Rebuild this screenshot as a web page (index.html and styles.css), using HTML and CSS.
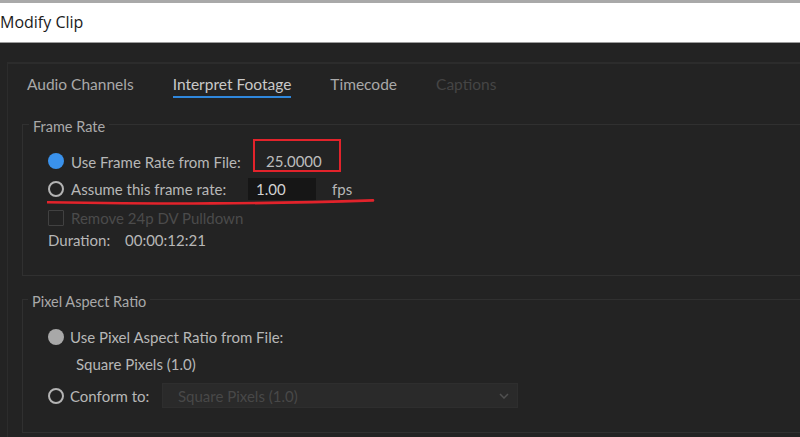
FILE: index.html
```html
<!DOCTYPE html>
<html>
<head>
<meta charset="utf-8">
<link rel="stylesheet" href="styles.css">
</head>
<body>
<div class="titlebar"><span class="title">Modify Clip</span></div>
<div class="dialog">
  <div class="panel">
    <div class="tabs">
      <div class="tab">Audio Channels</div>
      <div class="tab active">Interpret Footage</div>
      <div class="tab">Timecode</div>
      <div class="tab disabled">Captions</div>
    </div>

    <div class="group frame">
      <span class="legend">Frame Rate</span>
      <div class="row r1">
        <span class="radio on"></span>
        <span class="lbl wide">Use Frame Rate from File:</span>
        <span class="value-box">25.0000</span>
      </div>
      <div class="row r2">
        <span class="radio"></span>
        <span class="lbl wide">Assume this frame rate:</span>
        <span class="input">1.00</span>
        <span class="fps">fps</span>
        <svg class="redline" width="330" height="7" viewBox="0 0 330 7"><path d="M0 3.2 Q 90 4.6 165 4.4 T 326 1.4" fill="none" stroke="#e2232b" stroke-width="2.6" stroke-linecap="round"/></svg>
      </div>
      <div class="row r3">
        <span class="checkbox"></span>
        <span class="lbl disabled-text">Remove 24p DV Pulldown</span>
      </div>
      <div class="row r4">
        <span class="dur-label">Duration:</span>
        <span class="dur">00:00:12:21</span>
      </div>
    </div>

    <div class="group par">
      <span class="legend">Pixel Aspect Ratio</span>
      <div class="row p1">
        <span class="radio gray"></span>
        <span class="lbl tight">Use Pixel Aspect Ratio from File:</span>
      </div>
      <div class="row p2">
        <span class="sub">Square Pixels (1.0)</span>
      </div>
      <div class="row p3">
        <span class="radio"></span>
        <span class="lbl tight conform">Conform to:</span>
        <div class="select">
          <span class="select-text">Square Pixels (1.0)</span>
          <svg class="chev" width="10" height="6" viewBox="0 0 10 6"><path d="M1 1 L5 5 L9 1" fill="none" stroke="#505050" stroke-width="1.5"/></svg>
        </div>
      </div>
    </div>
  </div>
</div>
</body>
</html>
```

FILE: styles.css
```css
* { box-sizing: border-box; }
html, body {
  margin: 0;
  padding: 0;
}
body {
  width: 800px;
  height: 437px;
  overflow: hidden;
  background: #232323;
  font-family: "Lato", "Open Sans", sans-serif;
  font-size: 15px;
  color: #b7b7b7;
}
.titlebar {
  height: 43px;
  background: #ffffff;
  border-top: 3px solid #a9a9a9;
  border-bottom: 1px solid #9c9c9c;
  display: flex;
  align-items: center;
  overflow: hidden;
}
.title {
  font-family: "Open Sans", "Noto Sans", sans-serif;
  font-size: 16px;
  color: #1b1b1b;
  margin-left: 0;
  margin-top: -2px;
}
.dialog {
  padding-top: 19px;
  padding-left: 7px;
}
.panel {
  border-top: 2px solid #2c2c2c;
  border-left: 1px solid #2c2c2c;
  height: 380px;
}
.tabs {
  display: flex;
  gap: 39px;
  padding-left: 19px;
  padding-top: 10px;
  margin-bottom: 26px;
}
.tab {
  line-height: 20px;
  font-size: 15.5px;
  color: #a9a9a9;
  padding-bottom: 2px;
  border-bottom: 2px solid transparent;
}
.tab.active {
  color: #c9c9c9;
  border-bottom-color: #2f87dc;
}
.tab.disabled {
  color: #454545;
}
.group {
  margin-left: 14px;
  border-top: 1px solid #303030;
  border-left: 1px solid #303030;
  border-bottom: 1px solid #303030;
}
.frame { padding-bottom: 26px; }
.par { margin-top: 23px; padding-bottom: 24px; }
.legend {
  display: block;
  width: fit-content;
  margin: -6px 0 0 6px;
  padding: 0 4px;
  line-height: 16px;
  background: #232323;
  color: #a9a9a9;
  font-size: 14.5px;
}
.par .legend { margin-left: 5px; }
.row {
  display: flex;
  align-items: center;
  padding-left: 25px;
  position: relative;
  white-space: nowrap;
}
.r1 { margin-top: 17px; height: 18px; align-items: flex-start; }
.r1 .radio, .r1 .lbl { margin-top: 1px; }
.r2 { margin-top: 8px; height: 22px; }
.r3 { margin-top: 10px; height: 16px; }
.r4 { margin-top: 5px; height: 18px; }
.p1 { margin-top: 18px; height: 18px; }
.p2 { margin-top: 9px; height: 18px; padding-left: 53px; }
.p3 { margin-top: 10px; height: 25px; }

.radio {
  width: 16px;
  height: 16px;
  border-radius: 50%;
  border: 2px solid #b4b4b4;
  flex: none;
}
.radio.on {
  border: none;
  background: #3a92ec;
}
.radio.gray {
  border: none;
  background: #a8a8a8;
}
.lbl {
  margin-left: 7px;
  line-height: 18px;
}
.lbl.wide { width: 177px; }
.lbl.tight { margin-left: 6px; }
.lbl.conform { width: 92px; }
.value-box {
  margin-top: -13px;
  margin-left: 5px;
  width: 88px;
  height: 33px;
  border: 2px solid #e2232b;
  padding: 11px 0 0 11px;
  line-height: 18px;
  color: #bdbdbd;
}
.input {
  width: 68px;
  height: 22px;
  background: #161616;
  padding-left: 8px;
  line-height: 22px;
  color: #d2d2d2;
}
.fps {
  margin-left: 16px;
  color: #b7b7b7;
}
.redline {
  position: absolute;
  left: 24px;
  top: 21px;
}
.checkbox {
  width: 16px;
  height: 16px;
  border: 1px solid #414141;
  border-radius: 1px;
  flex: none;
}
.disabled-text { color: #4b4b4b; }
.dur-label { width: 77px; }
.dur { color: #b7b7b7; }
.sub { color: #b7b7b7; }
.select {
  width: 356px;
  height: 25px;
  background: #2a2a2a;
  border: 1px solid #2e2e2e;
  display: flex;
  align-items: center;
  padding-left: 15px;
  padding-right: 8px;
}
.select-text {
  flex: 1;
  color: #484848;
}
.chev { flex: none; }
```
